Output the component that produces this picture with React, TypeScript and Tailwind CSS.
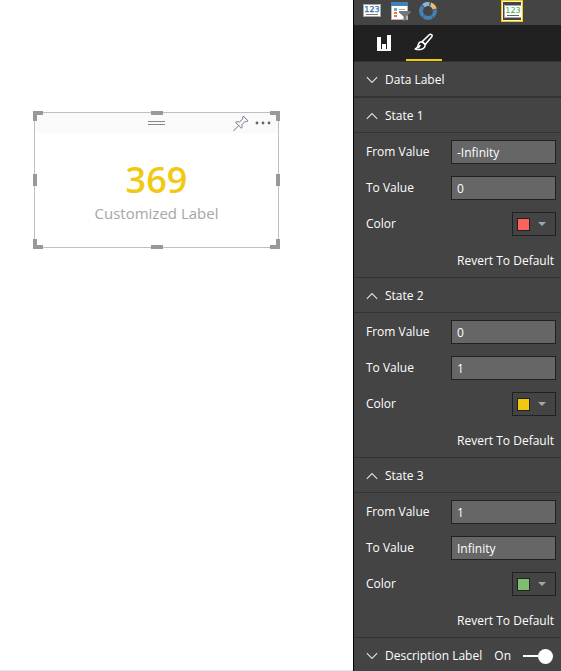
import { useId, type ReactNode } from "react";

type StateRule = { name: string; from: string; to: string; swatch: string };

const rules: StateRule[] = [
  { name: "State 1", from: "-Infinity", to: "0", swatch: "bg-[#fd625e]" },
  { name: "State 2", from: "0", to: "1", swatch: "bg-[#f2c80f]" },
  { name: "State 3", from: "1", to: "Infinity", swatch: "bg-[#7dbf6f]" },
];

const handles = [
  "-left-[2px] -top-[2px] h-[10px] w-[10px] border-l-4 border-t-4",
  "-right-[2px] -top-[2px] h-[10px] w-[10px] border-r-4 border-t-4",
  "-bottom-[2px] -left-[2px] h-[10px] w-[10px] border-b-4 border-l-4",
  "-bottom-[2px] -right-[2px] h-[10px] w-[10px] border-b-4 border-r-4",
  "left-[116px] -top-[2px] w-3 border-t-4",
  "left-[116px] -bottom-[2px] w-3 border-t-4",
  "-left-[2px] top-[61px] h-3 border-l-4",
  "-right-[2px] top-[61px] h-3 border-l-4",
];

function Chevron({ open }: { open: boolean }) {
  return (
    <svg width="12" height="8" viewBox="0 0 12 8" fill="none" stroke="#e0e0e0" strokeWidth="1.1" aria-hidden="true">
      <path d={open ? "M.8 6.8 6 1.5l5.200 5.300" : "M.8 1.200 6 6.500l5.200-5.300"} />
    </svg>
  );
}

function SectionHeader({ title, open, children }: { title: string; open: boolean; children?: ReactNode }) {
  return (
    <div className="flex h-[34px] items-center pl-3">
      <button type="button" aria-expanded={open} className="flex items-center gap-[7px] whitespace-nowrap pt-[2px]">
        <Chevron open={open} />
        {title}
      </button>
      {children}
    </div>
  );
}

function ValueRow({ label, value }: { label: string; value: string }) {
  const id = useId();
  return (
    <div className="flex items-center justify-between">
      <label htmlFor={id}>{label}</label>
      <input
        id={id}
        type="text"
        defaultValue={value}
        className="h-6 w-[105px] border border-[#212121] bg-[#666666] px-[5px] text-white outline-none"
      />
    </div>
  );
}

function StateSection({ rule }: { rule: StateRule }) {
  const id = useId();
  return (
    <section className="border-b border-[#333333]">
      <div className="border-b border-[#333333]">
        <SectionHeader title={rule.name} open />
      </div>
      <div className="flex flex-col gap-3 pb-[3px] pl-3 pr-[5px] pt-[7px]">
        <ValueRow label="From Value" value={rule.from} />
        <ValueRow label="To Value" value={rule.to} />
        <div className="flex items-center justify-between">
          <label htmlFor={id}>Color</label>
          <button
            id={id}
            type="button"
            aria-haspopup="true"
            className="flex h-6 w-11 items-center gap-2 border border-[#212121] pl-1"
          >
            <span className={`h-[13px] w-[13px] border border-[#212121] ${rule.swatch}`} />
            <svg width="8" height="4" viewBox="0 0 8 4" aria-hidden="true">
              <path d="M0 0h8L4 4z" fill="#a6a6a6" />
            </svg>
          </button>
        </div>
        <button type="button" className="mr-[2px] h-[26px] self-end">
          Revert To Default
        </button>
      </div>
    </section>
  );
}

function CardIcon() {
  return (
    <svg width="18" height="14" viewBox="0 0 18 14" aria-hidden="true">
      <rect x=".5" y=".5" width="17" height="12" fill="#fff" stroke="#a6a6a6" />
      <text x="9" y="8" textAnchor="middle" fontSize="8" fontFamily="DejaVu Sans, sans-serif" fill="#3572ab" stroke="#3572ab" strokeWidth=".3" textRendering="geometricPrecision">
        123
      </text>
      <path d="M3 10.500h12" stroke="#777" />
    </svg>
  );
}

function FilterCardIcon() {
  return (
    <svg width="20" height="20" viewBox="0 0 20 20" aria-hidden="true">
      <path d="M.5 1h16v16.500H.5z" fill="#fff" stroke="#b8b8b8" />
      <path d="M0 0h17v4H0z" fill="#4580b5" />
      <path d="M3 6h3v3H3z" fill="#73aad3" />
      <path d="M3 10h3v2H3zM3 13h3v2H3z" fill="#e8743b" />
      <path d="M8 7.500h6" stroke="#a6a6a6" />
      <path d="M8 9h11.500v1.500L15.500 14.500v3l-3 2v-5L8 10.500z" fill="#777" />
    </svg>
  );
}

function DonutIcon() {
  return (
    <svg width="20" height="20" viewBox="0 0 20 20" fill="none" strokeWidth="4" aria-hidden="true">
      <circle cx="10" cy="10" r="7" stroke="#4580b5" />
      <path d="M5.500 4.640A7 7 0 0 1 11.200 3.100" stroke="#88b5d8" />
      <path d="M12.400 3.420A7 7 0 0 1 16.760 8.200" stroke="#e8b978" />
      <path d="M6.500 6.500 3.500 3.500M11.800 5 12.500 1M14.500 9l4-1M13 14l2.500 3M6.500 14l-3 3" stroke="#444" strokeWidth=".8" />
    </svg>
  );
}

function CustomCardIcon() {
  return (
    <svg width="22" height="22" viewBox="0 0 22 22" aria-hidden="true">
      <path d="M0 0h22v22H0z" fill="#f2c811" />
      <path d="M1.500 1.500h19v19h-19z" fill="#444" stroke="#fff6cf" />
      <path d="M3 5h17v13H3z" fill="#fff" />
      <path d="M3.500 18V5.500H20M3.500 17.500H20" fill="none" stroke="#a6a6a6" />
      <text x="12" y="13" textAnchor="middle" fontSize="8" fontFamily="DejaVu Sans, sans-serif" fill="#37a845" textRendering="geometricPrecision">
        123
      </text>
      <path d="M6 15.500h12" stroke="#666" />
    </svg>
  );
}

function BrushIcon() {
  return (
    <svg width="20" height="18" viewBox="0 0 20 18" fill="none" stroke="#fff" strokeWidth="1.500" strokeLinejoin="round" strokeLinecap="round" aria-hidden="true">
      <path d="M8.200 8.600 15.300 1.700c1.500-1.200 3.600.2 2.500 2L11.300 11.500z" />
      <path d="M8 8.800c-2.300 0-3.300 1-3.700 2.900C4 13.900 3 15.300 1.200 16c3.400 1.200 8 .6 9.200-1.600.6-1.100.8-1.900.8-2.900z" />
      <path d="m6 12.500-1.500 2" />
    </svg>
  );
}

function Visual() {
  return (
    <article className="absolute left-[34px] top-28 h-[136px] w-[245px] border border-[#c0c0c0] bg-white">
      <header className="flex h-5 items-center justify-end gap-[6px] bg-[#fafafa] pr-[7px]">
        <button type="button" aria-label="Pin visual">
          <svg width="16" height="17" viewBox="0 0 16 17" fill="none" stroke="#72728a" strokeLinejoin="round" aria-hidden="true">
            <path d="m.5 16 5-5.300M2.500 7.300l6 5.900c.8-1.300.8-2.200.3-3.400l3.300-3.400c1.100.3 1.900.2 2.900-.5L10.300 1C9.700 2 9.600 2.800 9.900 3.800L6.500 7C5 6.500 3.800 6.500 2.500 7.300Z" />
          </svg>
        </button>
        <button type="button" aria-label="More options">
          <svg width="16" height="4" viewBox="0 0 16 4" fill="#666" aria-hidden="true">
            <circle cx="2" cy="2" r="1.400" />
            <circle cx="8" cy="2" r="1.400" />
            <circle cx="14" cy="2" r="1.400" />
          </svg>
        </button>
      </header>
      <span className="absolute left-[113px] top-2 h-1 w-[17px] border-y border-[#888888]" />
      <div className="flex flex-col items-center pt-6">
        <p className="text-4xl leading-[46px] font-semibold text-[#f2c811]">369</p>
        <p className="text-[15px] leading-5 text-[#a6a6a6]">Customized Label</p>
      </div>
      {handles.map((place) => (
        <span key={place} className={`absolute border-[#999999] ${place}`} />
      ))}
    </article>
  );
}

export default function App() {
  return (
    <div className="flex min-h-screen bg-white font-['Open_Sans','Noto_Sans',sans-serif] text-xs">
      <main className="relative min-w-0 flex-1 border-b border-[#e6e6e6]">
        <Visual />
      </main>
      <aside className="w-[208px] shrink-0 border-l border-black bg-[#444444] text-white">
        <div className="flex h-[25px] items-start pl-[9px]">
          <button type="button" aria-label="Card" className="pt-1">
            <CardIcon />
          </button>
          <button type="button" aria-label="Slicer" className="ml-[10px] pt-[2px]">
            <FilterCardIcon />
          </button>
          <button type="button" aria-label="Donut chart" className="ml-[7px] pt-[1px]">
            <DonutIcon />
          </button>
          <button type="button" aria-label="Custom card" className="ml-[63px]">
            <CustomCardIcon />
          </button>
        </div>
        <div role="tablist" className="flex h-9 bg-[#212121] pl-3">
          <button type="button" role="tab" aria-selected="false" aria-label="Fields" className="flex w-9 justify-center pt-[10px]">
            <svg width="14" height="16" viewBox="0 0 14 16" fill="#fff" aria-hidden="true">
              <path d="M0 2h4v12h1V9h4v5h1V0h4v16H0z" />
            </svg>
          </button>
          <button type="button" role="tab" aria-selected="true" aria-label="Format" className="ml-1 flex w-9 justify-center border-b-2 border-[#f2c811] pt-2">
            <BrushIcon />
          </button>
        </div>
        <section className="border-b-2 border-t border-[#333333]">
          <SectionHeader title="Data Label" open={false} />
        </section>
        {rules.map((rule) => (
          <StateSection key={rule.name} rule={rule} />
        ))}
        <div className="-mb-px">
          <SectionHeader title="Description Label" open={false}>
            <label className="relative ml-auto flex items-center gap-3 pr-2 pt-[2px]">
              On
              <input type="checkbox" role="switch" defaultChecked className="absolute inset-0 m-0 appearance-none" />
              <span className="flex h-4 w-[30px] items-center">
                <span className="h-[2px] flex-1 bg-white" />
                <span className="h-[15px] w-[15px] rounded-full bg-white" />
              </span>
            </label>
          </SectionHeader>
        </div>
      </aside>
    </div>
  );
}
